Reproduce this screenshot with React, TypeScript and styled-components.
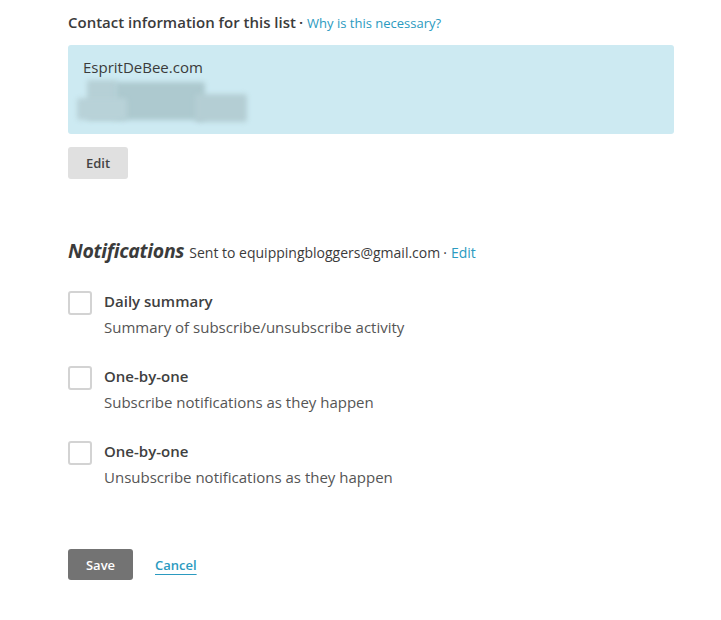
import styled, { createGlobalStyle } from "styled-components";

const Global = createGlobalStyle`
  body {
    margin: 0;
    background: #fff;
    font-family: "Open Sans", "Liberation Sans", sans-serif;
    color: #3b3b3b;
  }
`;

const Page = styled.div`
  width: 606px;
  padding: 12px 0 40px 68px;
`;

const SectionTitle = styled.div`
  font-size: 15px;
  line-height: 20px;
  font-weight: 600;
  color: #3b3b3b;
`;

const Dot = styled.span`
  margin: 0 4px 0 3px;
`;

const Link = styled.a<{ $small?: boolean }>`
  color: #2b9ac0;
  font-weight: 400;
  font-size: ${(p) => (p.$small ? "13px" : "14px")};
  text-decoration: none;
  cursor: pointer;
`;

const ContactBox = styled.div`
  margin-top: 12px;
  height: 89px;
  box-sizing: border-box;
  padding: 12px 15px 0;
  background: #cdeaf2;
  border-radius: 3px;
`;

const ContactName = styled.div`
  font-size: 15px;
  line-height: 20px;
  color: #3b3b3b;
`;

// blurred-out address
const Redacted = styled.div`
  position: relative;
  margin: 3px 0 0 -8px;
  width: 172px;
  height: 44px;
`;

const Smudge = styled.span<{ $x: number; $y: number; $w: number; $h: number; $c: string }>`
  position: absolute;
  left: ${(p) => p.$x}px;
  top: ${(p) => p.$y}px;
  width: ${(p) => p.$w}px;
  height: ${(p) => p.$h}px;
  background: ${(p) => p.$c};
  filter: blur(2.5px);
  border-radius: 3px;
`;

const Button = styled.button<{ $dark?: boolean }>`
  font-family: inherit;
  font-size: 13px;
  font-weight: 600;
  border: 0;
  border-radius: 3px;
  cursor: pointer;
  background: ${(p) => (p.$dark ? "#737373" : "#e0e0e0")};
  color: ${(p) => (p.$dark ? "#fff" : "#444")};
  height: ${(p) => (p.$dark ? "31px" : "32px")};
  width: ${(p) => (p.$dark ? "65px" : "60px")};
  padding: 0;
`;

const EditButton = styled(Button)`
  margin-top: 13px;
  display: block;
`;

const NotifHeader = styled.div`
  margin-top: 58px;
  display: flex;
  align-items: baseline;
  line-height: 28px;
`;

const NotifTitle = styled.h2`
  margin: 0 5px 0 0;
  font-size: 19.5px;
  font-style: italic;
  font-weight: 700;
  color: #3b3b3b;
  letter-spacing: -0.3px;
`;

const SentTo = styled.span`
  font-size: 14px;
  color: #3b3b3b;
`;

const Options = styled.div`
  margin-top: 24px;
  display: flex;
  flex-direction: column;
  gap: 29px;
`;

const Option = styled.label`
  display: flex;
  gap: 12px;
  cursor: pointer;
`;

const Box = styled.span`
  flex: none;
  width: 24px;
  height: 24px;
  box-sizing: border-box;
  border: 2px solid #d3d3d3;
  border-radius: 3px;
  background: #fff;
`;

const OptionText = styled.div`
  display: flex;
  flex-direction: column;
  gap: 6px;
`;

const OptionLabel = styled.div`
  font-size: 15px;
  line-height: 20px;
  font-weight: 600;
  color: #404040;
`;

const OptionDesc = styled.div`
  font-size: 15px;
  line-height: 20px;
  color: #555;
`;

const Actions = styled.div`
  margin-top: 62px;
  display: flex;
  align-items: center;
  gap: 22px;
`;

const CancelLink = styled.a`
  color: #2b9ac0;
  font-size: 13px;
  font-weight: 600;
  text-decoration: underline;
  text-decoration-thickness: 1px;
  text-underline-offset: 4px;
  cursor: pointer;
`;

const options = [
  { label: "Daily summary", desc: "Summary of subscribe/unsubscribe activity" },
  { label: "One-by-one", desc: "Subscribe notifications as they happen" },
  { label: "One-by-one", desc: "Unsubscribe notifications as they happen" },
];

export default function App() {
  return (
    <>
      <Global />
      <Page>
        <SectionTitle>
          Contact information for this list
          <Dot>·</Dot>
          <Link $small>Why is this necessary?</Link>
        </SectionTitle>
        <ContactBox>
          <ContactName>EspritDeBee.com</ContactName>
          <Redacted>
            <Smudge $x={12} $y={0} $w={30} $h={40} $c="#b6d0d6" />
            <Smudge $x={40} $y={2} $w={90} $h={38} $c="#adc9cf" />
            <Smudge $x={2} $y={18} $w={50} $h={22} $c="#b8d2d8" />
            <Smudge $x={120} $y={14} $w={52} $h={28} $c="#b4ced4" />
          </Redacted>
        </ContactBox>
        <EditButton>Edit</EditButton>

        <NotifHeader>
          <NotifTitle>Notifications</NotifTitle>
          <SentTo>
            Sent to equippingbloggers@gmail.com<Dot>·</Dot>
          </SentTo>
          <Link>Edit</Link>
        </NotifHeader>

        <Options>
          {options.map((o, i) => (
            <Option key={i}>
              <Box />
              <OptionText>
                <OptionLabel>{o.label}</OptionLabel>
                <OptionDesc>{o.desc}</OptionDesc>
              </OptionText>
            </Option>
          ))}
        </Options>

        <Actions>
          <Button $dark>Save</Button>
          <CancelLink>Cancel</CancelLink>
        </Actions>
      </Page>
    </>
  );
}
